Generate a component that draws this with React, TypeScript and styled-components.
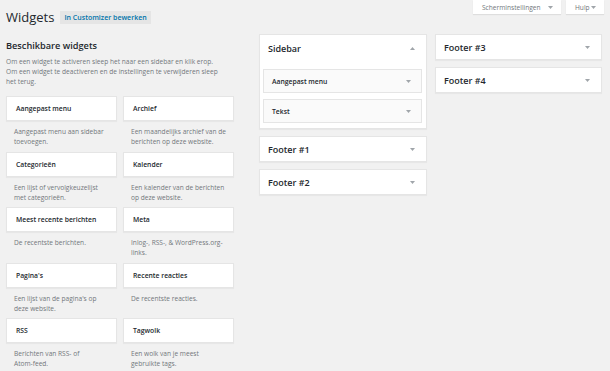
import React from "react";
import styled, { createGlobalStyle } from "styled-components";

const GlobalStyle = createGlobalStyle`
    * { box-sizing: border-box; }
    html, body {
        margin: 0;
        padding: 0;
        background: #f1f1f1;
        font-family: "Open Sans", "Noto Sans", sans-serif;
        color: #23282d;
    }
`;

const Page = styled.div`
    width: 610px;
    height: 371px;
    overflow: hidden;
`;

const TopBar = styled.div`
    display: flex;
    justify-content: space-between;
    align-items: flex-start;
    padding: 0 6px;
`;

const TitleRow = styled.div`
    display: flex;
    align-items: center;
    gap: 6px;
    padding-top: 8px;
    height: 26px;
`;

const Title = styled.h1`
    margin: 0;
    font-size: 13px;
    font-weight: 400;
    line-height: 18px;
    color: #23282d;
`;

const CustomizerLink = styled.a`
    display: inline-flex;
    align-items: center;
    height: 13px;
    padding: 0 4px;
    background: #e5e5e5;
    color: #0073aa;
    font-size: 7px;
    font-weight: 600;
    text-decoration: none;
`;

const ScreenMeta = styled.div`
    display: flex;
    gap: 5px;
`;

const MetaButton = styled.div<{ $w: number }>`
    display: flex;
    align-items: center;
    justify-content: space-between;
    width: ${(p) => p.$w}px;
    height: 14px;
    padding: 0 8px 0 9px;
    background: #fff;
    box-shadow: 0 1px 1px rgba(0, 0, 0, 0.08);
    color: #72777c;
    font-size: 6.6px;
`;

const Columns = styled.div`
    display: flex;
    align-items: flex-start;
    padding-left: 6px;
    margin-top: 8px;
`;

const Available = styled.div`
    width: 228px;
    margin-right: 25px;
    padding-top: 5px;
`;

const AvailableHeading = styled.h2`
    margin: 0;
    font-size: 9.2px;
    font-weight: 600;
    line-height: 14px;
`;

const Intro = styled.p`
    margin: 4px 0 9px;
    padding-right: 8px;
    font-size: 6.6px;
    line-height: 10px;
    color: #72777c;
`;

const WidgetGrid = styled.div`
    display: grid;
    grid-template-columns: 111px 111px;
    column-gap: 6px;
`;

const WidgetItem = styled.div`
    height: 55.5px;
`;

const WidgetTitle = styled.div`
    height: 25px;
    display: flex;
    align-items: center;
    padding-left: 9px;
    background: #fff;
    border: 1px solid #e5e5e5;
    box-shadow: 0 1px 1px rgba(0, 0, 0, 0.04);
    font-size: 6.8px;
    font-weight: 600;
`;

const WidgetDesc = styled.div`
    padding: 6px 6px 0 8px;
    font-size: 6.6px;
    line-height: 10px;
    color: #72777c;
`;

const NoWrap = styled.span`
    white-space: nowrap;
`;

const SidebarCol = styled.div<{ $w: number }>`
    width: ${(p) => p.$w}px;
    margin-right: 8px;
    display: flex;
    flex-direction: column;
    gap: 7px;
`;

const Panel = styled.div`
    background: #fff;
    border: 1px solid #e5e5e5;
    box-shadow: 0 1px 1px rgba(0, 0, 0, 0.04);
`;

const PanelHeader = styled.div<{ $h: number }>`
    height: ${(p) => p.$h}px;
    display: flex;
    align-items: center;
    justify-content: space-between;
    padding: 0 11px 0 8px;
    font-size: 9px;
    font-weight: 600;
`;

const PanelBody = styled.div`
    display: flex;
    flex-direction: column;
    gap: 6px;
    padding: 7px 4px 5px 3px;
`;

const InnerWidget = styled.div`
    height: 24px;
    display: flex;
    align-items: center;
    justify-content: space-between;
    padding: 0 10px 0 8px;
    background: #fafafa;
    border: 1px solid #e5e5e5;
    font-size: 6.8px;
    font-weight: 600;
`;

const Arrow = ({ up }: { up?: boolean }) => (
    <svg width="5" height="3" viewBox="0 0 5 3">
        <polygon points={up ? "0,3 5,3 2.5,0" : "0,0 5,0 2.5,3"} fill="#a0a5aa" />
    </svg>
);

const widgets: [string, React.ReactNode][] = [
    ["Aangepast menu", "Aangepast menu aan sidebar toevoegen."],
    ["Archief", "Een maandelijks archief van de berichten op deze website."],
    ["Categorieën", "Een lijst of vervolgkeuzelijst met categorieën."],
    ["Kalender", "Een kalender van de berichten op deze website."],
    ["Meest recente berichten", "De recentste berichten."],
    ["Meta", "Inlog-, RSS-, & WordPress.org-links."],
    ["Pagina's", "Een lijst van de pagina's op deze website."],
    ["Recente reacties", "De recentste reacties."],
    [
        "RSS",
        <>
            Berichten van RSS- of <NoWrap>Atom-feed.</NoWrap>
        </>,
    ],
    ["Tagwolk", "Een wolk van je meest gebruikte tags."],
];

const FooterPanel = ({ name }: { name: string }) => (
    <Panel>
        <PanelHeader $h={24}>
            {name}
            <Arrow />
        </PanelHeader>
    </Panel>
);

export default function App() {
    return (
        <Page>
            <GlobalStyle />
            <TopBar>
                <TitleRow>
                    <Title>Widgets</Title>
                    <CustomizerLink>In Customizer bewerken</CustomizerLink>
                </TitleRow>
                <ScreenMeta>
                    <MetaButton $w={88}>
                        Scherminstellingen <Arrow />
                    </MetaButton>
                    <MetaButton $w={38}>
                        Hulp <Arrow />
                    </MetaButton>
                </ScreenMeta>
            </TopBar>
            <Columns>
                <Available>
                    <AvailableHeading>Beschikbare widgets</AvailableHeading>
                    <Intro>
                        Om een widget te activeren sleep het naar een sidebar en klik erop.
                        <br />
                        Om een widget te deactiveren en de instellingen te verwijderen sleep het
                        terug.
                    </Intro>
                    <WidgetGrid>
                        {widgets.map(([name, desc]) => (
                            <WidgetItem key={name}>
                                <WidgetTitle>{name}</WidgetTitle>
                                <WidgetDesc>{desc}</WidgetDesc>
                            </WidgetItem>
                        ))}
                    </WidgetGrid>
                </Available>
                <SidebarCol $w={170}>
                    <Panel>
                        <PanelHeader $h={27}>
                            Sidebar
                            <Arrow up />
                        </PanelHeader>
                        <PanelBody>
                            <InnerWidget>
                                Aangepast menu
                                <Arrow />
                            </InnerWidget>
                            <InnerWidget>
                                Tekst
                                <Arrow />
                            </InnerWidget>
                        </PanelBody>
                    </Panel>
                    <FooterPanel name="Footer #1" />
                    <FooterPanel name="Footer #2" />
                </SidebarCol>
                <SidebarCol $w={169}>
                    <FooterPanel name="Footer #3" />
                    <FooterPanel name="Footer #4" />
                </SidebarCol>
            </Columns>
        </Page>
    );
}
